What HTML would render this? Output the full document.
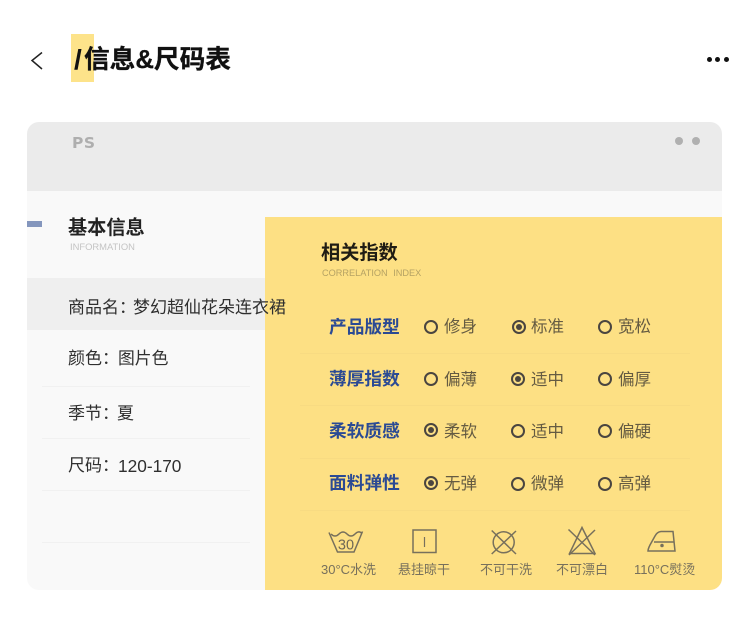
<!DOCTYPE html>
<html lang="zh"><head><meta charset="utf-8">
<style>
html,body{margin:0;padding:0;background:#fff}
body{width:749px;height:625px;position:relative;overflow:hidden;font-family:"Liberation Sans","Noto Sans CJK SC",sans-serif}
.a{position:absolute}
.t{position:absolute;white-space:nowrap;line-height:20px;font-family:"Liberation Sans","Noto Sans CJK SC",sans-serif}
.l{font-size:17px;color:#2f2f2f;left:68px}
.h{font-size:17.700px;font-weight:700;color:#2b4a94;left:329px}
.o{font-size:16.500px;color:#655b42}
.r{position:absolute;width:10px;height:10px;border:2px solid #4a4540;border-radius:50%}
.r.c::after{content:"";position:absolute;left:2px;top:2px;width:6px;height:6px;border-radius:50%;background:#4a4540}
.sl{position:absolute;left:42px;width:208px;height:1px;background:#f1f1f1}
.sy{position:absolute;left:300px;width:390px;height:1px;background:#f8db82}
.c{font-size:13px;color:#77705c;top:560px}
svg{position:absolute;overflow:visible}
</style></head>
<body>
<svg style="left:0;top:0" width="749" height="100"><path d="M42 52.500L32 60.500L42 69" fill="none" stroke="#222" stroke-width="1.500"/></svg>
<div class="a" style="left:71px;top:34px;width:23px;height:48px;background:#fde38a"></div>
<div class="t" style="left:74px;top:45px;font-size:28px;font-weight:700;color:#111;line-height:30px">/</div>
<div class="t" style="left:84px;top:45px;font-size:25.700px;font-weight:700;color:#111;line-height:30px;-webkit-text-stroke:.3px #111">信息&amp;尺码表</div>
<div class="a" style="left:706.500px;top:57px;width:5px;height:5px;border-radius:50%;background:#111"></div>
<div class="a" style="left:714.500px;top:57px;width:5px;height:5px;border-radius:50%;background:#111"></div>
<div class="a" style="left:723.500px;top:57px;width:5px;height:5px;border-radius:50%;background:#111"></div>

<div class="a" style="left:27px;top:122px;width:695px;height:468px;border-radius:12px;background:#f9f9f9;overflow:hidden">
  <div class="a" style="left:0;top:0;width:695px;height:69px;background:#ebebeb"></div>
  <div class="a" style="left:0;top:156px;width:238px;height:52px;background:#efefef"></div>
  <div class="a" style="left:238px;top:95px;width:457px;height:373px;background:#fde084"></div>
  <div class="a" style="left:0;top:99px;width:15px;height:6px;background:#8496bd"></div>
</div>
<div class="t" style="left:72px;top:133px;font-size:15.500px;font-weight:700;color:#aeaeae;font-family:'DejaVu Sans',sans-serif;letter-spacing:.5px">PS</div>
<div class="a" style="left:675px;top:137px;width:8px;height:8px;border-radius:50%;background:#b0b0b0"></div>
<div class="a" style="left:692px;top:137px;width:8px;height:8px;border-radius:50%;background:#b0b0b0"></div>

<div class="t" style="left:68px;top:219px;font-size:19.200px;font-weight:700;color:#222">基本信息</div>
<div class="t" style="left:70px;top:237px;font-size:9.400px;color:#c4c4c4">INFORMATION</div>
<div class="t l" style="top:298px">商品名：</div><div class="t l" style="left:133px;top:298px">梦幻超仙花朵连衣裙</div>
<div class="t l" style="top:349px">颜色：</div><div class="t l" style="left:118px;top:349px;font-size:16.800px">图片色</div>
<div class="t l" style="top:404px">季节：</div><div class="t l" style="left:117px;top:404px">夏</div>
<div class="t l" style="top:456px">尺码：</div><div class="t l" style="left:118px;top:456px;font-size:17.300px">120-170</div>
<div class="sl" style="top:386px"></div><div class="sl" style="top:438px"></div><div class="sl" style="top:490px"></div><div class="sl" style="top:542px"></div>

<div class="t" style="left:321px;top:244px;font-size:19.200px;font-weight:700;color:#1f1c14">相关指数</div>
<div class="t" style="left:322px;top:263px;font-size:9.200px;color:#b5a264;word-spacing:3px">CORRELATION INDEX</div>

<div class="sy" style="top:353px"></div><div class="sy" style="top:405px"></div><div class="sy" style="top:458px"></div><div class="sy" style="top:510px"></div>

<div class="t h" style="top:317px">产品版型</div>
<div class="r" style="left:424px;top:320px"></div><div class="t o" style="left:444px;top:317px">修身</div>
<div class="r c" style="left:512px;top:320px"></div><div class="t o" style="left:531px;top:317px">标准</div>
<div class="r" style="left:598px;top:320px"></div><div class="t o" style="left:618px;top:317px">宽松</div>

<div class="t h" style="top:369px">薄厚指数</div>
<div class="r" style="left:424px;top:372px"></div><div class="t o" style="left:444px;top:370px">偏薄</div>
<div class="r c" style="left:511px;top:372px"></div><div class="t o" style="left:531px;top:370px">适中</div>
<div class="r" style="left:598px;top:372px"></div><div class="t o" style="left:618px;top:370px">偏厚</div>

<div class="t h" style="top:421px">柔软质感</div>
<div class="r c" style="left:424px;top:423px"></div><div class="t o" style="left:444px;top:422px">柔软</div>
<div class="r" style="left:511px;top:424px"></div><div class="t o" style="left:531px;top:422px">适中</div>
<div class="r" style="left:598px;top:424px"></div><div class="t o" style="left:618px;top:422px">偏硬</div>

<div class="t h" style="top:473px">面料弹性</div>
<div class="r c" style="left:424px;top:476px"></div><div class="t o" style="left:444px;top:474px">无弹</div>
<div class="r" style="left:511px;top:477px"></div><div class="t o" style="left:531px;top:474px">微弹</div>
<div class="r" style="left:598px;top:477px"></div><div class="t o" style="left:618px;top:474px">高弹</div>

<svg style="left:0;top:0" width="749" height="625" fill="none" stroke="#77705c" stroke-width="1.500">
  <path d="M329 532.500L337.500 552H354L362.500 531.500"/>
  <path d="M331 534Q335 538 339 534T347 534T355 534T362 533.500"/>
  <text x="346" y="549.500" font-size="14.500" text-anchor="middle" fill="#6f6855" stroke="none" font-family="Liberation Sans">30</text>
  <rect x="413" y="530" width="23" height="22.500"/>
  <path d="M424.500 537V547" stroke-width="1.200"/>
  <circle cx="503.700" cy="542.300" r="10.500"/>
  <path d="M491.700 554L516 531M491.700 530.500L516 554"/>
  <path d="M582 527.500L569.500 553.500H595Z"/>
  <path d="M568.500 529.500L595 555M595 530L569 555"/>
  <path d="M648 551H675L673 531.500H661Q657 532 655 536L650 545Q648 549 648 551Z"/>
  <path d="M654 542H673.500"/>
  <circle cx="662" cy="545.500" r="1" fill="#77705c"/>
</svg>
<div class="t c" style="left:321px">30°C水洗</div>
<div class="t c" style="left:398px">悬挂晾干</div>
<div class="t c" style="left:480px">不可干洗</div>
<div class="t c" style="left:556px">不可漂白</div>
<div class="t c" style="left:634px">110°C熨烫</div>
</body></html>
